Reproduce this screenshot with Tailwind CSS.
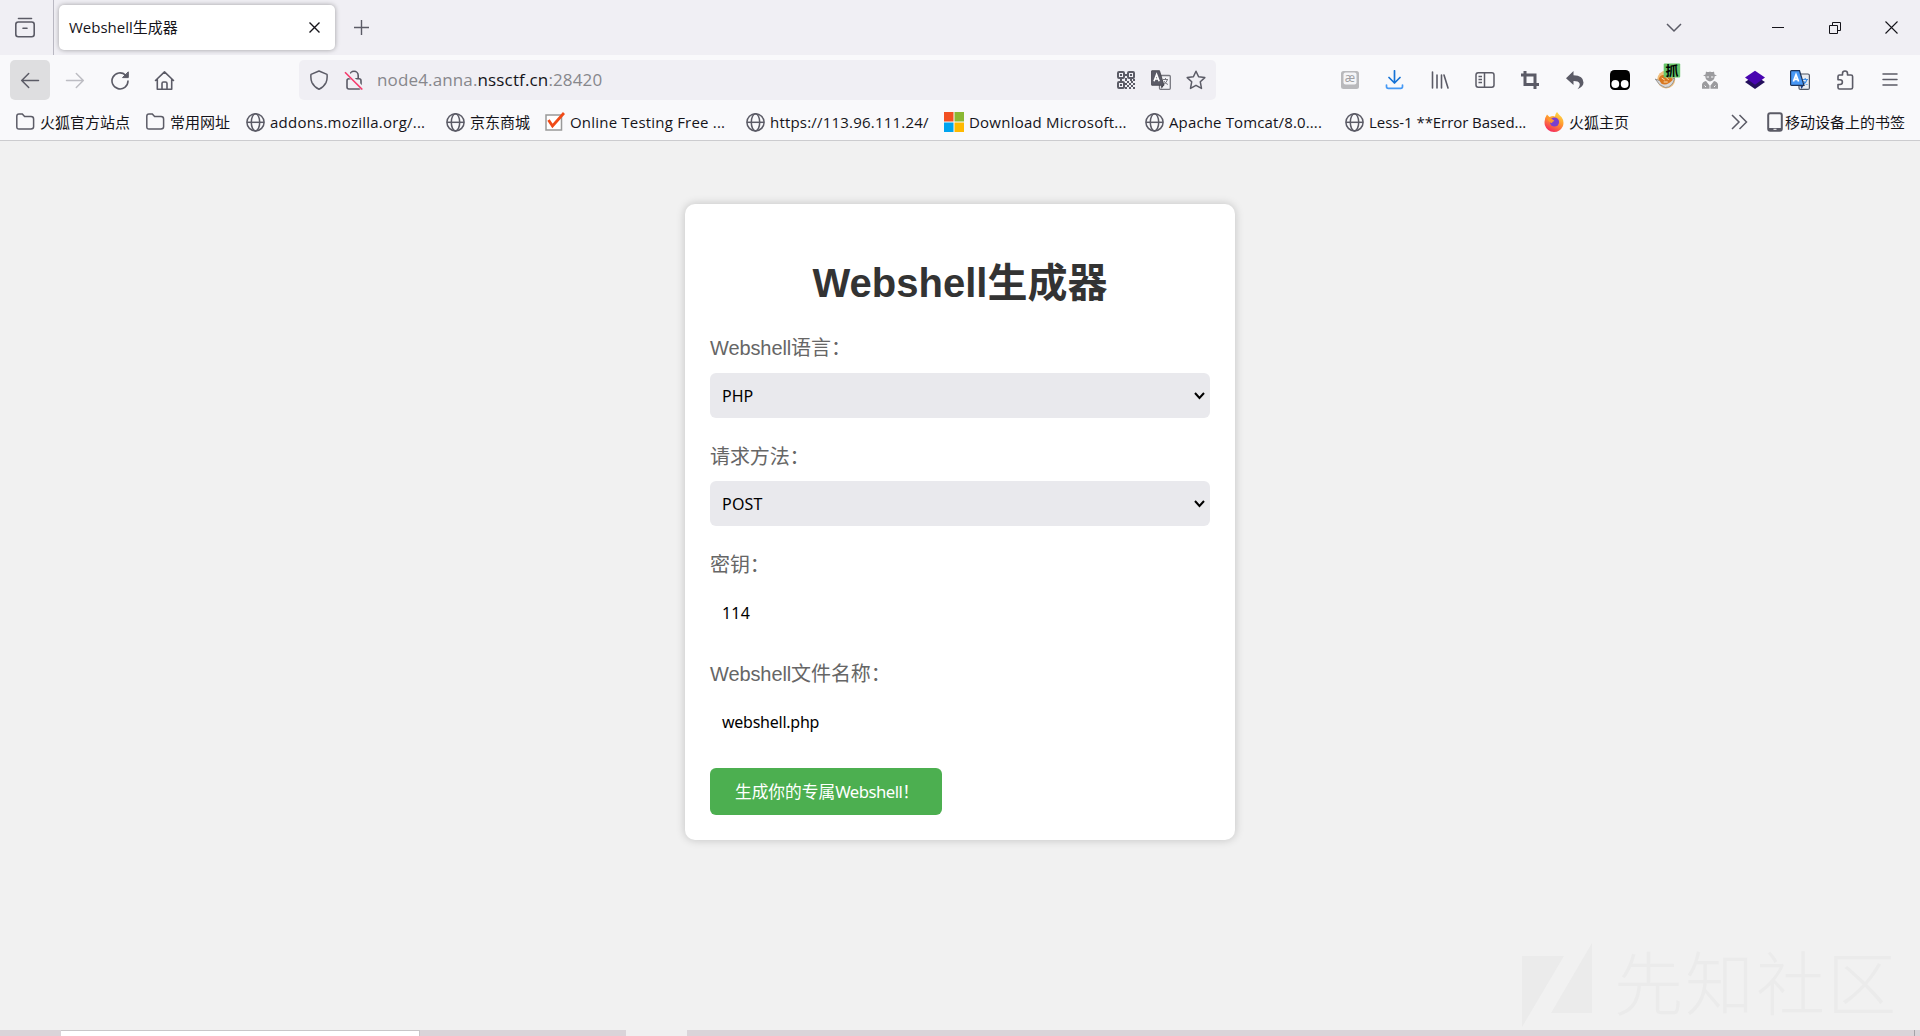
<!DOCTYPE html>
<html lang="zh-CN">
<head>
<meta charset="utf-8">
<title>Webshell生成器</title>
<script src="https://cdn.jsdelivr.net/npm/@tailwindcss/browser@4"></script>
</head>
<body class="w-[1920px] h-[1036px] overflow-hidden bg-[#f1f1f1] flex flex-col font-['Open_Sans','Noto_Sans_CJK_SC',sans-serif] text-[#15141a]">
<svg class="hidden">
  <symbol id="globe" viewBox="0 0 20 20"><g fill="none" stroke="#5b5b66" stroke-width="1.5"><circle cx="10.5" cy="10.3" r="8.6"/><ellipse cx="10.5" cy="10.3" rx="4.2" ry="8.6"/><path d="M1.9 10.3H19.1"/></g></symbol>
  <symbol id="folder" viewBox="0 0 20 20"><path d="M1.8 4.2Q1.8 2 4 2H7.3L9.6 4.6H16Q18.6 4.600 18.600 7V14.800Q18.600 17 16 17H4Q1.800 17 1.800 14.800Z" fill="none" stroke="#5b5b66" stroke-width="1.5"/></symbol>
</svg>

<!-- Tab strip -->
<header class="h-[55px] shrink-0 bg-[#f0eff4] flex items-center">
  <div class="w-[54px] h-full border-r border-[#b9b8c2] flex items-center pl-[14px]">
    <svg width="22" height="22" viewBox="0 0 22 22" fill="none" stroke="#5b5b66" stroke-width="1.6" stroke-linecap="round"><path d="M4.5 1.5H17.5"/><rect x="1.8" y="5" width="18.4" height="14.8" rx="2.5"/><path d="M9 11.2H13"/></svg>
  </div>
  <div class="ml-[5px] w-[276px] h-[45px] rounded-[5px] bg-white shadow-[0_0_5px_rgba(0,0,0,0.35)] flex items-center justify-between pl-[10px] pr-[15px]">
    <span class="text-[15px] whitespace-nowrap">Webshell生成器</span>
    <svg width="11" height="11" viewBox="0 0 11 11" stroke="#15141a" stroke-width="1.4"><path d="M.5 .5L10.5 10.5M10.5 .5L.5 10.5"/></svg>
  </div>
  <svg class="ml-[19px]" width="15" height="15" viewBox="0 0 15 15" stroke="#5b5b66" stroke-width="1.4"><path d="M7.5 0V15M0 7.5H15"/></svg>
  <div class="ml-auto flex items-center pr-[22px]">
    <svg class="mr-[90px]" width="16" height="10" viewBox="0 0 16 10" fill="none" stroke="#5b5b66" stroke-width="1.5"><path d="M1 1L8 8L15 1"/></svg>
    <svg class="mr-[45px]" width="12" height="12" viewBox="0 0 12 12" stroke="#15141a"><path d="M0 5.5H12"/></svg>
    <svg class="mr-[44px]" width="12" height="12" viewBox="0 0 12 12" fill="none" stroke="#15141a"><path d="M.5 3.5H8.5V11.5H.5ZM3.5 3.5V.5H11.5V8.5H8.5"/></svg>
    <svg width="13" height="13" viewBox="0 0 13 13" stroke="#15141a" stroke-width="1.1"><path d="M.5 .5L12.5 12.5M12.5 .5L.5 12.5"/></svg>
  </div>
</header>

<!-- Navigation toolbar -->
<nav class="h-[50px] shrink-0 bg-[#f9f9fb] flex items-center pl-[10px]">
  <div class="size-10 rounded-[5px] bg-[#dedee0] flex items-center justify-center">
    <svg width="20" height="20" viewBox="0 0 20 20" fill="none" stroke="#5b5b66" stroke-width="1.5" stroke-linecap="round" stroke-linejoin="round"><path d="M18.500 10.500H1.700M8.700 3.500L1.700 10.500L8.700 17.500"/></svg>
  </div>
  <svg class="ml-[15px]" width="20" height="20" viewBox="0 0 20 20" fill="none" stroke="#bdbdc3" stroke-width="1.5" stroke-linecap="round" stroke-linejoin="round"><path d="M1.5 10.5H18.300M11.300 3.500L18.300 10.500L11.300 17.500"/></svg>
  <svg class="ml-[25px]" width="20" height="20" viewBox="0 0 20 20" fill="none" stroke="#5b5b66" stroke-width="1.6" stroke-linecap="round"><path d="M18 11A8 8 0 1 1 15.5 5.1"/><path d="M18.300 2.200V7.600H12.900Z" fill="#5b5b66" stroke-width="1" stroke-linejoin="round"/></svg>
  <svg class="ml-[24px]" width="21" height="21" viewBox="0 0 21 21" fill="none" stroke="#5b5b66" stroke-width="1.6" stroke-linecap="round" stroke-linejoin="round"><path d="M1.5 10.5L10.5 1.8L19.5 10.5M3.3 9V19.2H17.7V9M8 19V13.5Q8 12 9.5 12H11.5Q13 12 13 13.5V19"/></svg>
  <div class="ml-[124px] w-[917px] h-10 rounded-[5px] bg-[#f0eff4] flex items-center px-[10px]">
    <svg width="20" height="20" viewBox="0 0 20 20" fill="none" stroke="#5b5b66" stroke-width="1.5" stroke-linejoin="round"><path d="M10 1L18 4.400Q18.600 9 17 12.600Q14.800 17 10 19.200Q5.200 17 3 12.600Q1.400 9 2 4.400Z"/></svg>
    <svg class="ml-[15px]" width="20" height="20" viewBox="0 0 20 20" fill="none" stroke="#5b5b66" stroke-width="1.6"><rect x="3" y="8.800" width="14" height="10.200" rx="2"/><path d="M5.800 8.800V5.500A4.200 4.200 0 0 1 14.200 5.500V8.800"/><path d="M2 2L19 19" stroke="#f0eff4" stroke-width="4"/><path d="M1 2.200L18.300 19.500" stroke="#f5386a" stroke-width="1.6"/></svg>
    <div class="ml-[13px] text-[17px] tracking-[0.14px] text-[#87878c] whitespace-nowrap flex"><span>node4.anna.</span><span class="text-[#15141a]">nssctf.cn</span><span>:28420</span></div>
    <div class="ml-auto flex items-center gap-[15px]">
      <svg width="20" height="20" viewBox="0 0 20 20"><g fill="none" stroke="#5b5b66" stroke-width="2"><rect x="2" y="2" width="6" height="6" rx="1"/><rect x="12" y="2" width="6" height="6" rx="1"/><rect x="2" y="12" width="6" height="6" rx="1"/></g><path fill="#5b5b66" d="M4 4h2v2H4zM14 4h2v2h-2zM4 14h2v2H4zM8 4h4v2H8zM4 8h2v4H4zM14 8h2v3h-2zM9 8h2v3H9zM11 11h2v2h-2zM15 11h2v2h-2zM9 13h2v2H9zM13 13h2v2h-2zM17 13h2v2h-2zM11 15h2v2h-2zM15 15h2v2h-2zM9 17h2v2H9zM13 17h2v2h-2zM17 17h2v2h-2zM17 9h2v2h-2z"/></svg>
      <svg width="20" height="20" viewBox="0 0 20 20"><rect x="8.5" y="5.5" width="10.8" height="13.8" rx="1" fill="#f3f3f6" stroke="#77777f" stroke-width="1.3"/><path d="M12 9.5H17M14.5 8V9.5M16.5 9.5Q15.500 13 12.500 14.500M13 11Q14 13.500 17 14.500" stroke="#77777f" fill="none"/><path d="M1 .7H8.500L13 15.300H1Q.3 15.300 .3 14.500V1.500Q.3 .7 1 .7Z" fill="#5b5b66" stroke="#3d3d45" stroke-width=".8"/><path d="M10 15.500L13 15.300L10.500 18.800Z" fill="#3d3d45"/><path d="M3 11.200L5.600 4.400L8.200 11.200M4 9H7.300" stroke="#fff" stroke-width="1.6" fill="none"/></svg>
      <svg width="20" height="20" viewBox="0 0 20 20" fill="none" stroke="#5b5b66" stroke-width="1.5" stroke-linejoin="round"><path d="M10 1.200L12.600 6.800L18.800 7.600L14.300 11.800L15.500 18.400L10 15.300L4.500 18.400L5.700 11.800L1.200 7.600L7.400 6.800Z"/></svg>
    </div>
  </div>
  <div class="ml-[124px] flex items-center gap-[25px]">
    <svg width="20" height="20" viewBox="0 0 20 20"><rect x="1" y="1" width="18" height="18" rx="2.5" fill="#b9b9bc"/><rect x="3.500" y="2.500" width="13" height="12" rx="2" fill="#f5f5f7"/><text x="10" y="11.500" font-size="12" text-anchor="middle" fill="#a0a0a4" font-family="Open Sans">æ</text></svg>
    <svg width="20" height="20" viewBox="0 0 20 20" fill="none" stroke-width="1.7" stroke-linecap="round" stroke-linejoin="round"><path d="M9.500 .8V13M4 7.500L9.500 13L15 7.500" stroke="#1673d6"/><path d="M1.500 15V16.500Q1.500 18.300 3.300 18.300H15.700Q17.500 18.300 17.500 16.500V15" stroke="#4599f5"/></svg>
    <svg width="20" height="20" viewBox="0 0 20 20" stroke="#5b5b66" stroke-width="1.6" stroke-linecap="round"><path d="M2.500 2V18M7 5V18M11.500 5V18M14 5L18 18"/></svg>
    <svg width="20" height="20" viewBox="0 0 20 20" fill="none" stroke="#5b5b66" stroke-width="1.5"><rect x="1" y="2.800" width="18" height="14.400" rx="2.200"/><path d="M9.500 3V17M3.500 6.500H7M3.500 9.500H7M3.500 12.500H7"/></svg>
    <svg width="20" height="20" viewBox="0 0 20 20" fill="none" stroke="#5b5b66" stroke-width="3"><path d="M5 1V14.500H19M1 5H15V19"/></svg>
    <svg width="20" height="20" viewBox="0 0 20 20" fill="#5b5b66"><path d="M1 8.200L8.500 1V5.200Q18.500 5.400 18.500 12.500Q18.500 16.500 12.500 19.200Q15.500 15.800 14.500 13.300Q13.300 10.900 8.500 11V15Z"/></svg>
    <svg width="20" height="20" viewBox="0 0 20 20"><rect width="20" height="20" rx="4.500" fill="#000"/><circle cx="5.300" cy="14" r="3.900" fill="#fff"/><circle cx="14.700" cy="14" r="3.900" fill="#fff"/></svg>
    <svg class="overflow-visible" width="20" height="20" viewBox="0 0 20 20"><g transform="translate(.7 0)"><circle cx="10.500" cy="9.500" r="9" fill="#f1bf7c"/><path d="M-.5 9Q9 14 19 8Q17 17.500 9.500 17.500Q3.500 16 -.5 9Z" fill="#d9d9da" stroke="#888" stroke-width=".8"/><path d="M3 9Q5 3.500 10 5.500Q15.500 6 17 10Q11 16.500 5.500 13.500Z" fill="#d9771f"/><path d="M6 8L9 10M10 7L13 10M8 12L12 12" stroke="#ffe0b0"/><rect x="8" y="-6.500" width="16.500" height="14" rx="1" fill="#66c56b"/><text x="16.300" y="5" font-size="13" font-weight="700" text-anchor="middle" font-family="Noto Sans CJK SC">抓</text></g></svg>
    <svg width="20" height="20" viewBox="0 0 20 20" fill="#9b9b9e"><path d="M6 1.500Q8 2.500 10 1.500Q12 2.500 14 1.500L14.500 4.500L17 5.500L14.700 6.200Q14.600 10.500 10 11.500Q5.400 10.500 5.300 6.200L3 5.500L5.500 4.500Z"/><path d="M2 18.700V14.500Q2.500 11.500 6 11L9.500 15.500V18.700ZM18 18.700V14.500Q17.500 11.500 14 11L10.500 15.500V18.700Z"/><path d="M6.700 7H9M11 7H13.300M4.500 15.500L6 17M15.500 15.500L14 17" stroke="#f9f9fb"/></svg>
    <svg width="20" height="20" viewBox="0 0 20 20"><path d="M0 12L10 5.500L20 12L10 19Z" fill="#24105c"/><path d="M0 7.500L10 .8L20 7.500L10 14.700Z" fill="#4805b0"/></svg>
    <svg width="20" height="20" viewBox="0 0 20 20"><rect x="9" y="4" width="10.400" height="15.400" rx="1.500" fill="#e9ecf1" stroke="#4f5665" stroke-width="1.200"/><path d="M12.500 9.500H18M15.200 8V9.500M17 9.500Q16 13 13 14.500M13.500 11Q14.500 13.500 17.500 14.500" stroke="#3f8fe8" fill="none" stroke-width="1.200"/><path d="M10 15L14 15L11.500 19Z" fill="#1d3f86"/><path d="M1.500 .7H9.500L14 15.300H1.500Q.6 15.300 .6 14.500V1.500Q.6 .7 1.500 .7Z" fill="#4797f5" stroke="#1d3359" stroke-width="1.200"/><path d="M3.400 11.500L6 4.600L8.600 11.500M4.400 9.300H7.700" stroke="#fff" stroke-width="1.700" fill="none"/></svg>
    <svg width="20" height="20" viewBox="0 0 20 20" fill="none" stroke="#5b5b66" stroke-width="1.600" stroke-linejoin="round"><path d="M3 6.500Q3 5 4.500 5H7.500V3.500A2.500 2.500 0 0 1 12.500 3.500V5H16Q17.600 5 17.600 6.500V17.500Q17.600 19 16 19H4.500Q3 19 3 17.500V14.500H5A2.400 2.400 0 0 0 5 9.700H3Z"/></svg>
    <svg width="20" height="20" viewBox="0 0 20 20" stroke="#5b5b66" stroke-width="1.500" stroke-linecap="round"><path d="M3 4H17M3 9.500H17M3 15H17"/></svg>
  </div>
</nav>

<!-- Bookmarks toolbar -->
<div class="h-[36px] shrink-0 bg-[#f9f9fb] border-b border-[#cccccf] flex items-center pl-[15px] pb-[1px] text-[15px] whitespace-nowrap">
  <div class="w-[130px] shrink-0 flex items-center gap-[5px]"><svg class="size-5 shrink-0"><use href="#folder"/></svg><span>火狐官方站点</span></div>
  <div class="w-[100px] shrink-0 flex items-center gap-[5px]"><svg class="size-5 shrink-0"><use href="#folder"/></svg><span>常用网址</span></div>
  <div class="w-[200px] shrink-0 flex items-center gap-[5px]"><svg class="size-5 shrink-0"><use href="#globe"/></svg><span class="tracking-[0.23px]">addons.mozilla.org/...</span></div>
  <div class="w-[100px] shrink-0 flex items-center gap-[5px]"><svg class="size-5 shrink-0"><use href="#globe"/></svg><span>京东商城</span></div>
  <div class="w-[200px] shrink-0 flex items-center gap-[5px]"><svg class="size-5 shrink-0" viewBox="0 0 20 20"><rect x="1" y="3" width="15.500" height="15" fill="#fff" stroke="#999" stroke-width="1.500"/><path d="M3.500 8L7.500 14L19 1" fill="none" stroke="#f04a16" stroke-width="2.800"/></svg><span class="tracking-[0.2px]">Online Testing Free ...</span></div>
  <div class="w-[199px] shrink-0 flex items-center gap-[5px]"><svg class="size-5 shrink-0"><use href="#globe"/></svg><span class="tracking-[0.2px]">https://113.96.111.24/</span></div>
  <div class="w-[200px] shrink-0 flex items-center gap-[5px]"><svg class="size-5 shrink-0" viewBox="0 0 20 20"><path fill="#f25022" d="M0 0h9.500v9.500H0z"/><path fill="#8ab833" d="M10.500 0H20v9.500h-9.500z"/><path fill="#00a4ef" d="M0 10.500h9.500V20H0z"/><path fill="#ffb900" d="M10.500 10.500H20V20h-9.500z"/></svg><span class="tracking-[0.23px]">Download Microsoft...</span></div>
  <div class="w-[200px] shrink-0 flex items-center gap-[5px]"><svg class="size-5 shrink-0"><use href="#globe"/></svg><span class="tracking-[0.14px]">Apache Tomcat/8.0....</span></div>
  <div class="w-[200px] shrink-0 flex items-center gap-[5px]"><svg class="size-5 shrink-0"><use href="#globe"/></svg><span class="tracking-[-0.06px]">Less-1 **Error Based...</span></div>
  <div class="flex items-center gap-[5px]"><svg class="size-5 shrink-0" viewBox="0 0 20 20"><defs><linearGradient id="fx" x1=".8" y1="0" x2=".3" y2="1"><stop offset="0" stop-color="#ffe14a"/><stop offset=".45" stop-color="#ff9a2e"/><stop offset="1" stop-color="#f5245f"/></linearGradient></defs><path d="M13 0Q15 3 17.500 5Q20.500 9 19 14Q16 20 10 20Q3 19.500 .8 13Q-.3 7 3 2.500L5.500 5Q9 3.500 11 4.500Q11 2 13 0Z" fill="url(#fx)"/><circle cx="10.500" cy="10" r="4.600" fill="#7a3fd0"/><path d="M3 6Q8 6 10.500 9Q8 9.500 8 11Q5 11 3 6Z" fill="#ff9a2e"/></svg><span>火狐主页</span></div>
  <svg class="ml-auto mr-[19px]" width="17" height="16" viewBox="0 0 17 16" fill="none" stroke="#5b5b66" stroke-width="1.500"><path d="M1 1L8 8L1 15M8.500 1L15.500 8L8.500 15"/></svg>
  <svg class="mr-[2px]" width="16" height="20" viewBox="0 0 16 20"><rect x="1.200" y="1.200" width="13.600" height="17.600" rx="2" fill="none" stroke="#5b5b66" stroke-width="2"/><path d="M1.500 16H14.500V19H1.500Z" fill="#5b5b66"/><path d="M6.500 17.300H9.500" stroke="#f9f9fb"/></svg>
  <span class="mr-[15px]">移动设备上的书签</span>
</div>

<!-- Page -->
<main class="relative grow flex justify-center items-start pt-[63px]">
  <form class="w-[550px] h-[636px] rounded-[10px] bg-white shadow-[0_0_10px_rgba(0,0,0,0.2)] px-[25px] font-['Liberation_Sans','Noto_Sans_CJK_SC',sans-serif]">
    <h1 class="mt-[49px] h-[60px] leading-[60px] text-[40px] font-bold text-[#333] text-center">Webshell生成器</h1>
    <label class="block mt-[20px] h-[30px] leading-[30px] text-[20px] tracking-[-0.1px] text-[#666]">Webshell语言：</label>
    <div class="mt-[10px] h-[45px] rounded-[6px] bg-[#e9e9ed] pl-[12px] pr-[5px] flex items-center justify-between font-['Noto_Sans'] text-[16px] text-black"><span>PHP</span><svg width="11" height="8" viewBox="0 0 11 8" fill="none" stroke="#000" stroke-width="2"><path d="M1 1L5.500 6L10 1"/></svg></div>
    <label class="block mt-[24px] h-[30px] leading-[30px] text-[20px] tracking-[-0.1px] text-[#666]">请求方法：</label>
    <div class="mt-[9px] h-[45px] rounded-[6px] bg-[#e9e9ed] pl-[12px] pr-[5px] flex items-center justify-between font-['Noto_Sans'] text-[16px] text-black"><span class="pt-px tracking-[0.2px]">POST</span><svg width="11" height="8" viewBox="0 0 11 8" fill="none" stroke="#000" stroke-width="2"><path d="M1 1L5.500 6L10 1"/></svg></div>
    <label class="block mt-[24px] h-[30px] leading-[30px] text-[20px] tracking-[-0.1px] text-[#666]">密钥：</label>
    <div class="mt-[10px] h-[45px] px-[12px] flex items-center font-['Noto_Sans'] text-[16px] tracking-[0.2px] text-black"><span>114</span></div>
    <label class="block mt-[24px] h-[30px] leading-[30px] text-[20px] tracking-[-0.1px] text-[#666]">Webshell文件名称：</label>
    <div class="mt-[10px] h-[45px] px-[12px] flex items-center font-['Noto_Sans'] text-[16px] tracking-[-0.25px] text-black"><span>webshell.php</span></div>
    <div class="mt-[24px] w-[232px] h-[47px] rounded-[6px] bg-[#4caf50] pl-[25px] pt-px flex items-center font-['Noto_Sans','Noto_Sans_CJK_SC'] text-[16.700px] text-white whitespace-nowrap">生成你的专属<span class="tracking-[-0.5px]">Webshell</span>！</div>
  </form>
  <div class="absolute left-[1522px] bottom-0 h-[87px] flex text-[#ebebeb]">
    <svg width="70" height="84" viewBox="0 0 70 84" fill="#ebebeb"><path d="M0 13H42L0 84ZM70 0V70H29Z"/></svg>
    <span class="ml-[22px] leading-[75px] text-[69px] tracking-[2px] font-light whitespace-nowrap font-['Noto_Sans_CJK_SC']">先知社区</span>
  </div>
</main>

<!-- Taskbar edge -->
<footer class="h-[6px] shrink-0 bg-[#dad4d9] flex">
  <div class="ml-[61px] w-[359px] bg-white border-t border-r border-[#c8c6c8]"></div>
  <div class="ml-[206px] w-[61px] bg-[#f0eff0]"></div>
  <div class="ml-auto mr-[5px] w-px bg-[#a5a3a8]"></div>
</footer>
</body>
</html>
